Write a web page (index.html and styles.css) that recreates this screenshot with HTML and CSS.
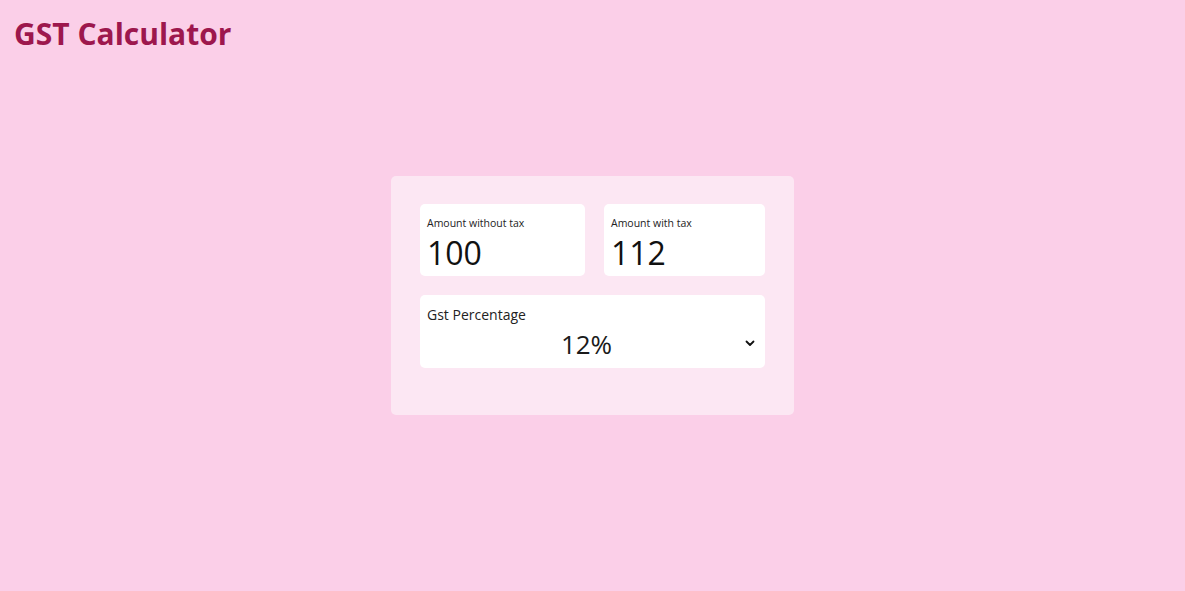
FILE: index.html
```html
<!DOCTYPE html>
<html lang="en">
<head>
<meta charset="utf-8">
<title>GST Calculator</title>
<link rel="stylesheet" href="styles.css">
</head>
<body>
<header class="header">
  <h1 class="title">GST Calculator</h1>
</header>
<main class="main">
  <section class="card">
    <div class="row">
      <div class="field">
        <div class="label">Amount without tax</div>
        <div class="value">100</div>
      </div>
      <div class="field">
        <div class="label">Amount with tax</div>
        <div class="value">112</div>
      </div>
    </div>
    <div class="field select-field">
      <div class="label label-lg">Gst Percentage</div>
      <div class="select">
        <span class="select-value">12%</span>
        <svg class="chevron" width="10" height="7" viewBox="0 0 10 7"><path d="M1.5 1.5 L5 5 L8.5 1.5" fill="none" stroke="#111" stroke-width="1.8" stroke-linecap="round" stroke-linejoin="round"/></svg>
      </div>
    </div>
  </section>
</main>
</body>
</html>
```
FILE: styles.css
```css
html, body {
  margin: 0;
  padding: 0;
}
body {
  background: #fbcfe8;
  font-family: "Open Sans", "Noto Sans", sans-serif;
  color: #111;
  width: 1185px;
  height: 591px;
  overflow: hidden;
}
.header {
  padding: 13px 14px 0;
}
.title {
  margin: 0;
  font-size: 30px;
  font-weight: 700;
  color: #9d174d;
  line-height: 42px;
  letter-spacing: 0;
}
.main {
  display: flex;
  justify-content: center;
  padding-top: 121px;
}
.card {
  width: 403px;
  box-sizing: border-box;
  padding: 28px 29px 47px;
  background: #fce7f3;
  border-radius: 5px;
  display: flex;
  flex-direction: column;
  gap: 19px;
}
.row {
  display: grid;
  grid-template-columns: 165px 161px;
  gap: 19px;
}
.field {
  background: #fff;
  border-radius: 5px;
  height: 72px;
  box-sizing: border-box;
  padding: 12px 7px 0;
}
.label {
  font-size: 10.5px;
  line-height: 15px;
  color: #222;
}
.value {
  font-size: 32px;
  line-height: 32px;
  color: #111;
  margin-top: 6px;
}
.select-field {
  height: 73px;
  padding-top: 10px;
}
.label-lg {
  font-size: 14px;
  line-height: 19px;
}
.select {
  display: flex;
  align-items: center;
  justify-content: center;
  position: relative;
  height: 34px;
  padding-top: 3px;
  padding-right: 12px;
}
.select-value {
  font-size: 26px;
  line-height: 30px;
  color: #1a1a1a;
}
.chevron {
  position: absolute;
  right: 3px;
  top: 16px;
}
```
